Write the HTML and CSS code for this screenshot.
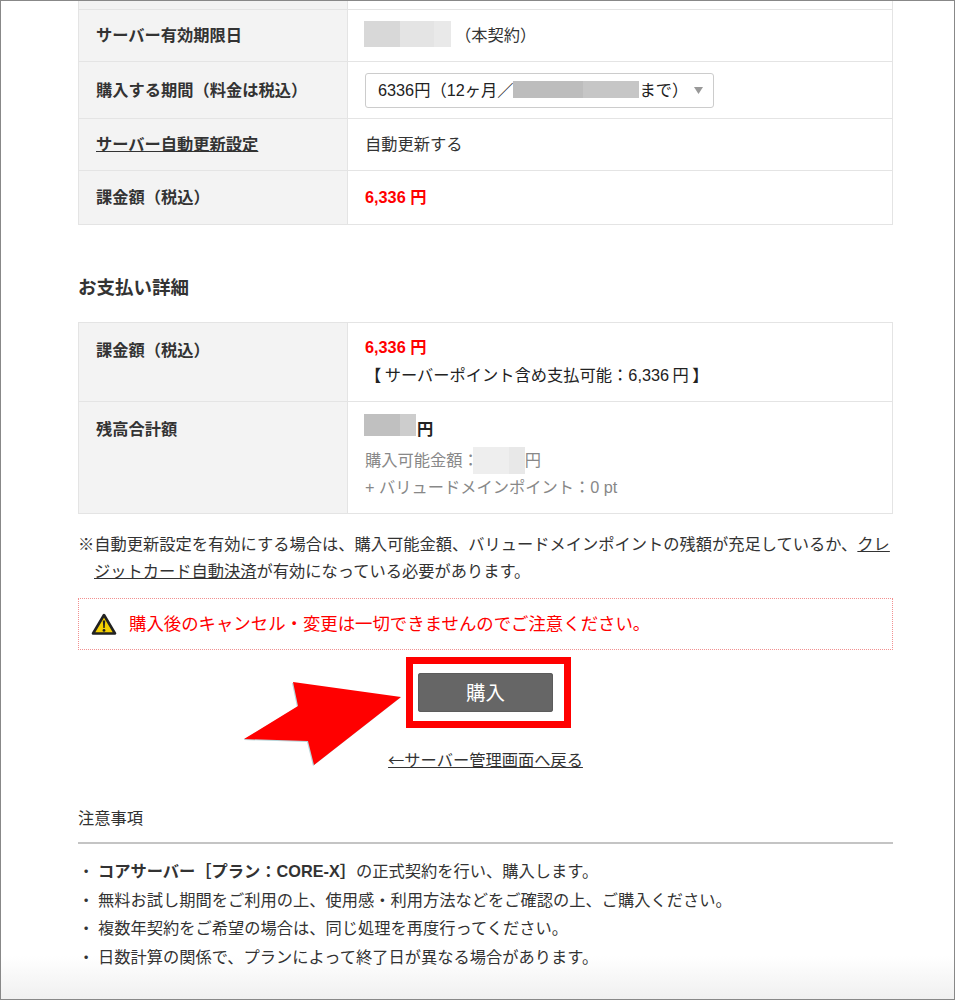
FILE: index.html
```html
<!DOCTYPE html>
<html lang="ja">
<head>
<meta charset="utf-8">
<title>購入</title>
<link rel="stylesheet" href="styles.css">
</head>
<body>
<div class="frame">
  <div class="table first">
    <div class="row stub"><div class="th"></div><div class="td"></div></div>
    <div class="row r52"><div class="th">サーバー有効期限日</div><div class="td"><span class="blur blur-date"><i></i><i></i><i></i></span><span class="contract">（本契約）</span></div></div>
    <div class="row r57"><div class="th">購入する期間（料金は税込）</div><div class="td"><div class="select"><span>6336円（12ヶ月／</span><span class="blur blur-until"><i></i><i></i></span><span>まで）</span><svg class="caret" width="9" height="7" viewBox="0 0 9 7"><path d="M0 0H9L4.5 7Z" fill="#999"/></svg></div></div></div>
    <div class="row r52"><div class="th"><a class="link">サーバー自動更新設定</a></div><div class="td">自動更新する</div></div>
    <div class="row r54"><div class="th">課金額（税込）</div><div class="td price">6,336 円</div></div>
  </div>

  <h2 class="heading">お支払い詳細</h2>

  <div class="table">
    <div class="row r79"><div class="th top">課金額（税込）</div><div class="td col"><div class="price l27">6,336 円</div><div class="l28 available">【 サーバーポイント含め支払可能：6,336 円 】</div></div></div>
    <div class="row r112"><div class="th top">残高合計額</div><div class="td col"><div class="balance"><span class="blur blur-bal"><i></i><i></i></span>円</div><div class="l27 muted"><span>購入可能金額：</span><span class="blur blur-avail"><i></i><i></i></span>円</div><div class="l27 muted">+ バリュードメインポイント：0 pt</div></div></div>
  </div>

  <p class="note">※自動更新設定を有効にする場合は、購入可能金額、バリュードメインポイントの残額が充足しているか、<a class="link">クレ</a><br><a class="link">ジットカード自動決済</a>が有効になっている必要があります。</p>

  <div class="warning">
    <svg width="26" height="24" viewBox="0 0 26 24"><path d="M13 3 24 21.5H2Z" fill="#f5d000" stroke="#222" stroke-width="2.6" stroke-linejoin="round"/><path d="M11.8 8.5h2.4l-.5 7.5h-1.4Z" fill="#222"/><circle cx="13" cy="18.4" r="1.4" fill="#222"/></svg>
    <span class="warning-text">購入後のキャンセル・変更は一切できませんのでご注意ください。</span>
  </div>

  <div class="action">
    <svg class="arrow" width="160" height="90" viewBox="0 0 160 90"><path d="M49 1 54 25 0 58 64 60 70 84 157 16Z" fill="#b7d4d8" transform="translate(-1 1)"/><path d="M49 1 54 25 0 58 64 60 70 84 157 16Z" fill="#f00"/></svg>
    <div class="buy-box"><button class="buy">購入</button></div>
    <a class="link back">←サーバー管理画面へ戻る</a>
  </div>

  <h3 class="notes-title">注意事項</h3>
  <ul class="notes">
    <li><b>コアサーバー［プラン：CORE-X］</b>の正式契約を行い、購入します。</li>
    <li>無料お試し期間をご利用の上、使用感・利用方法などをご確認の上、ご購入ください。</li>
    <li>複数年契約をご希望の場合は、同じ処理を再度行ってください。</li>
    <li>日数計算の関係で、プランによって終了日が異なる場合があります。</li>
  </ul>
</div>
</body>
</html>
```
FILE: styles.css
```css
* { box-sizing: border-box; }
html, body { margin: 0; padding: 0; }
body {
  width: 955px;
  height: 1000px;
  overflow: hidden;
  font-family: "Liberation Sans", "Noto Sans CJK JP", sans-serif;
  font-size: 16.25px;
  color: #333;
  background: #fff;
}
.frame {
  position: relative;
  width: 955px;
  height: 1000px;
  padding: 0 61px 0 77px;
  border: 1px solid #888;
  overflow: hidden;
  background: linear-gradient(to bottom, #fff 0, #fff 955px, #f0f0f0 998px);
}
.table { border-bottom: 1px solid #e4e4e4; border-left: 1px solid #e4e4e4; border-right: 1px solid #e4e4e4; }
.row { display: flex; border-top: 1px solid #e4e4e4; }
.first .stub { height: 8px; border-top: 0; }
.r52 { height: 52px; }
.r57 { height: 57px; }
.r54 { height: 54px; }
.r79 { height: 79px; }
.r112 { height: 112px; }
.th {
  width: 269px;
  flex: none;
  display: flex;
  align-items: center;
  padding-left: 17px;
  background: #f3f3f3;
  border-right: 1px solid #e4e4e4;
  font-weight: bold;
  color: #333;
}
.first .th, .first .td { padding-bottom: 3px; }
.th.top { align-items: flex-start; padding-top: 14px; }
.td {
  flex: 1;
  display: flex;
  align-items: center;
  padding-left: 17px;
  color: #333;
}
.td.col { flex-direction: column; align-items: flex-start; justify-content: flex-start; padding-top: 11px; }
.l27 { line-height: 27px; height: 27px; }
.l28 { line-height: 28px; height: 28px; }
.available { color: #222; word-spacing: -1px; }
.balance { display: flex; align-items: center; height: 34px; padding-bottom: 4px; font-weight: bold; color: #222; }
.muted { color: #888; display: flex; align-items: center; }
.price { color: #f00; font-weight: bold; }
.link { color: #333; text-decoration: underline; }
.blur { display: inline-flex; align-self: center; }
.blur i { display: block; height: 100%; }
.blur-date { width: 87px; height: 26px; margin-right: 4px; margin-left: -1px; }
.blur-date i:nth-child(1) { width: 36px; background: #d8d8d8; }
.blur-date i:nth-child(2) { width: 34px; background: #e4e4e4; }
.blur-date i:nth-child(3) { width: 17px; background: #e9e9e9; }
.blur-until { width: 126px; height: 17px; }
.blur-until i:nth-child(1) { width: 70px; background: #bdbdbd; }
.blur-until i:nth-child(2) { width: 56px; background: #c6c6c6; }
.blur-bal { width: 52px; height: 22px; margin-top: -6px; margin-left: -1px; margin-right: 1px; }
.blur-bal i:nth-child(1) { width: 36px; background: #c0c0c0; }
.blur-bal i:nth-child(2) { width: 16px; background: #cdcdcd; }
.blur-avail { width: 52px; height: 27px; margin-left: -6px; }
.blur-avail i:nth-child(1) { width: 36px; background: #eeeeee; }
.blur-avail i:nth-child(2) { width: 16px; background: #e8e8e8; }
.select {
  display: flex;
  align-items: center;
  width: 349px;
  height: 35px;
  margin-top: 4px;
  padding: 0 10px 3px 12px;
  background: #fff;
  border: 1px solid #ccc;
  border-radius: 3px;
  color: #222;
}
.caret { margin-left: auto; margin-top: 3px; }
.heading {
  margin: 51px 0 22px;
  height: 24px;
  line-height: 24px;
  font-size: 18.5px;
  font-weight: bold;
  color: #333;
}
.note {
  margin: 17px 0 0;
  padding-left: 16px;
  text-indent: -16px;
  line-height: 27px;
  color: #333;
}
.warning {
  display: flex;
  align-items: center;
  gap: 12px;
  height: 52px;
  margin-top: 13px;
  padding-left: 12px;
  border: 1px dotted #f29090;
  color: #f00;
  font-size: 17.4px;
}
.warning-text { margin-top: -4px; }
.action {
  display: flex;
  flex-direction: column;
  align-items: center;
  width: 815px;
  padding-top: 7px;
}
.buy-box {
  width: 165px;
  height: 71px;
  margin-left: 6px;
  padding-right: 6px;
  border: 7px solid #f00;
  display: flex;
  align-items: center;
  justify-content: center;
  background: #fff;
}
.buy {
  width: 135px;
  height: 39px;
  padding: 0 0 2px;
  border: 0;
  border-radius: 3px;
  background: #666;
  box-shadow: 0 0 0 1px #5c5c5c inset;
  color: #fff;
  font: 19.5px "Liberation Sans", "Noto Sans CJK JP", sans-serif;
}
.arrow { position: absolute; left: 243px; top: 680px; }
.back { margin-top: 18px; line-height: 27px; height: 27px; font-family: "Noto Sans CJK JP", sans-serif; }
.notes-title {
  margin: 32px 0 0;
  height: 39px;
  line-height: 26px;
  font-weight: normal;
  font-size: 16.25px;
  border-bottom: 2px solid #c4c4c4;
  color: #333;
}
.notes { list-style: none; margin: 13px 0 0; padding: 0; }
.notes li {
  position: relative;
  height: 28.7px;
  line-height: 28.7px;
  padding-left: 20px;
  color: #333;
}
.notes li::before { content: "・"; position: absolute; left: 0; top: 0; }
```
